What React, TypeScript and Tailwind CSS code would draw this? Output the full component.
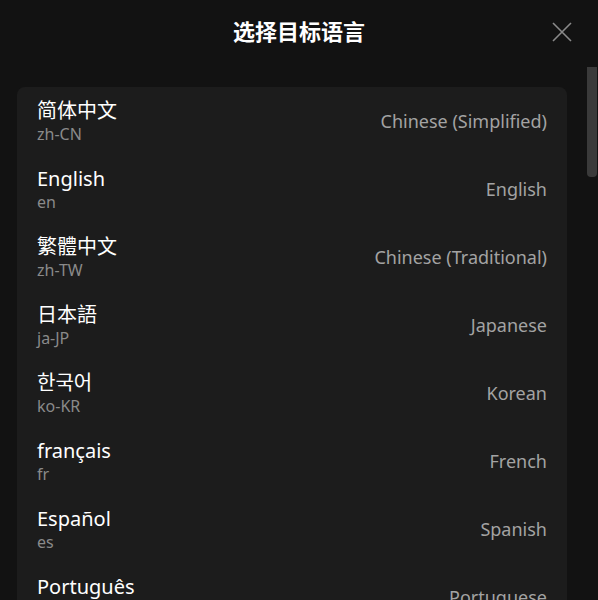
import React from 'react';

interface Lang {
  name: string;
  code: string;
  english: string;
}

const languages: Lang[] = [
  { name: '简体中文', code: 'zh-CN', english: 'Chinese (Simplified)' },
  { name: 'English', code: 'en', english: 'English' },
  { name: '繁體中文', code: 'zh-TW', english: 'Chinese (Traditional)' },
  { name: '日本語', code: 'ja-JP', english: 'Japanese' },
  { name: '한국어', code: 'ko-KR', english: 'Korean' },
  { name: 'français', code: 'fr', english: 'French' },
  { name: 'Español', code: 'es', english: 'Spanish' },
  { name: 'Português', code: 'pt', english: 'Portuguese' },
  { name: 'Deutsch', code: 'de', english: 'German' },
];

const App: React.FC = () => {
  return (
    <div
      className="relative h-[600px] w-[598px] overflow-hidden bg-[#121212] text-white"
      style={{ fontFamily: '"Noto Sans", "Noto Sans CJK SC", sans-serif' }}
    >
      <div className="flex h-[67px] items-center justify-center pb-[6px]">
        <h1 className="text-[22px] font-bold leading-none">选择目标语言</h1>
        <button className="absolute right-[26px] top-[22px] text-[#8a8a8a]">
          <svg width="20" height="20" viewBox="0 0 20 20" fill="none" stroke="currentColor" strokeWidth="1.6">
            <path d="M1 1L19 19M19 1L1 19" />
          </svg>
        </button>
      </div>

      <div className="pl-[17px] pr-[31px] pt-[20px]">
        <div className="rounded-lg bg-[#1c1c1c]">
          {languages.map((l) => (
            <div key={l.code} className="flex h-[68px] items-center justify-between px-5">
              <div className="flex flex-col pt-[2px]">
                <span className="text-[20px] leading-[24px] text-white">{l.name}</span>
                <span className="text-[16px] leading-[22px] text-[#8a8a8a]">{l.code}</span>
              </div>
              <span className="text-[18px] text-[#a3a3a3]">{l.english}</span>
            </div>
          ))}
        </div>
      </div>

      {/* scrollbar */}
      <div className="absolute right-[1px] top-[67px] h-[110px] w-[10px] rounded-b-[4px] bg-[#3a3a3a]" />
    </div>
  );
};

export default App;
